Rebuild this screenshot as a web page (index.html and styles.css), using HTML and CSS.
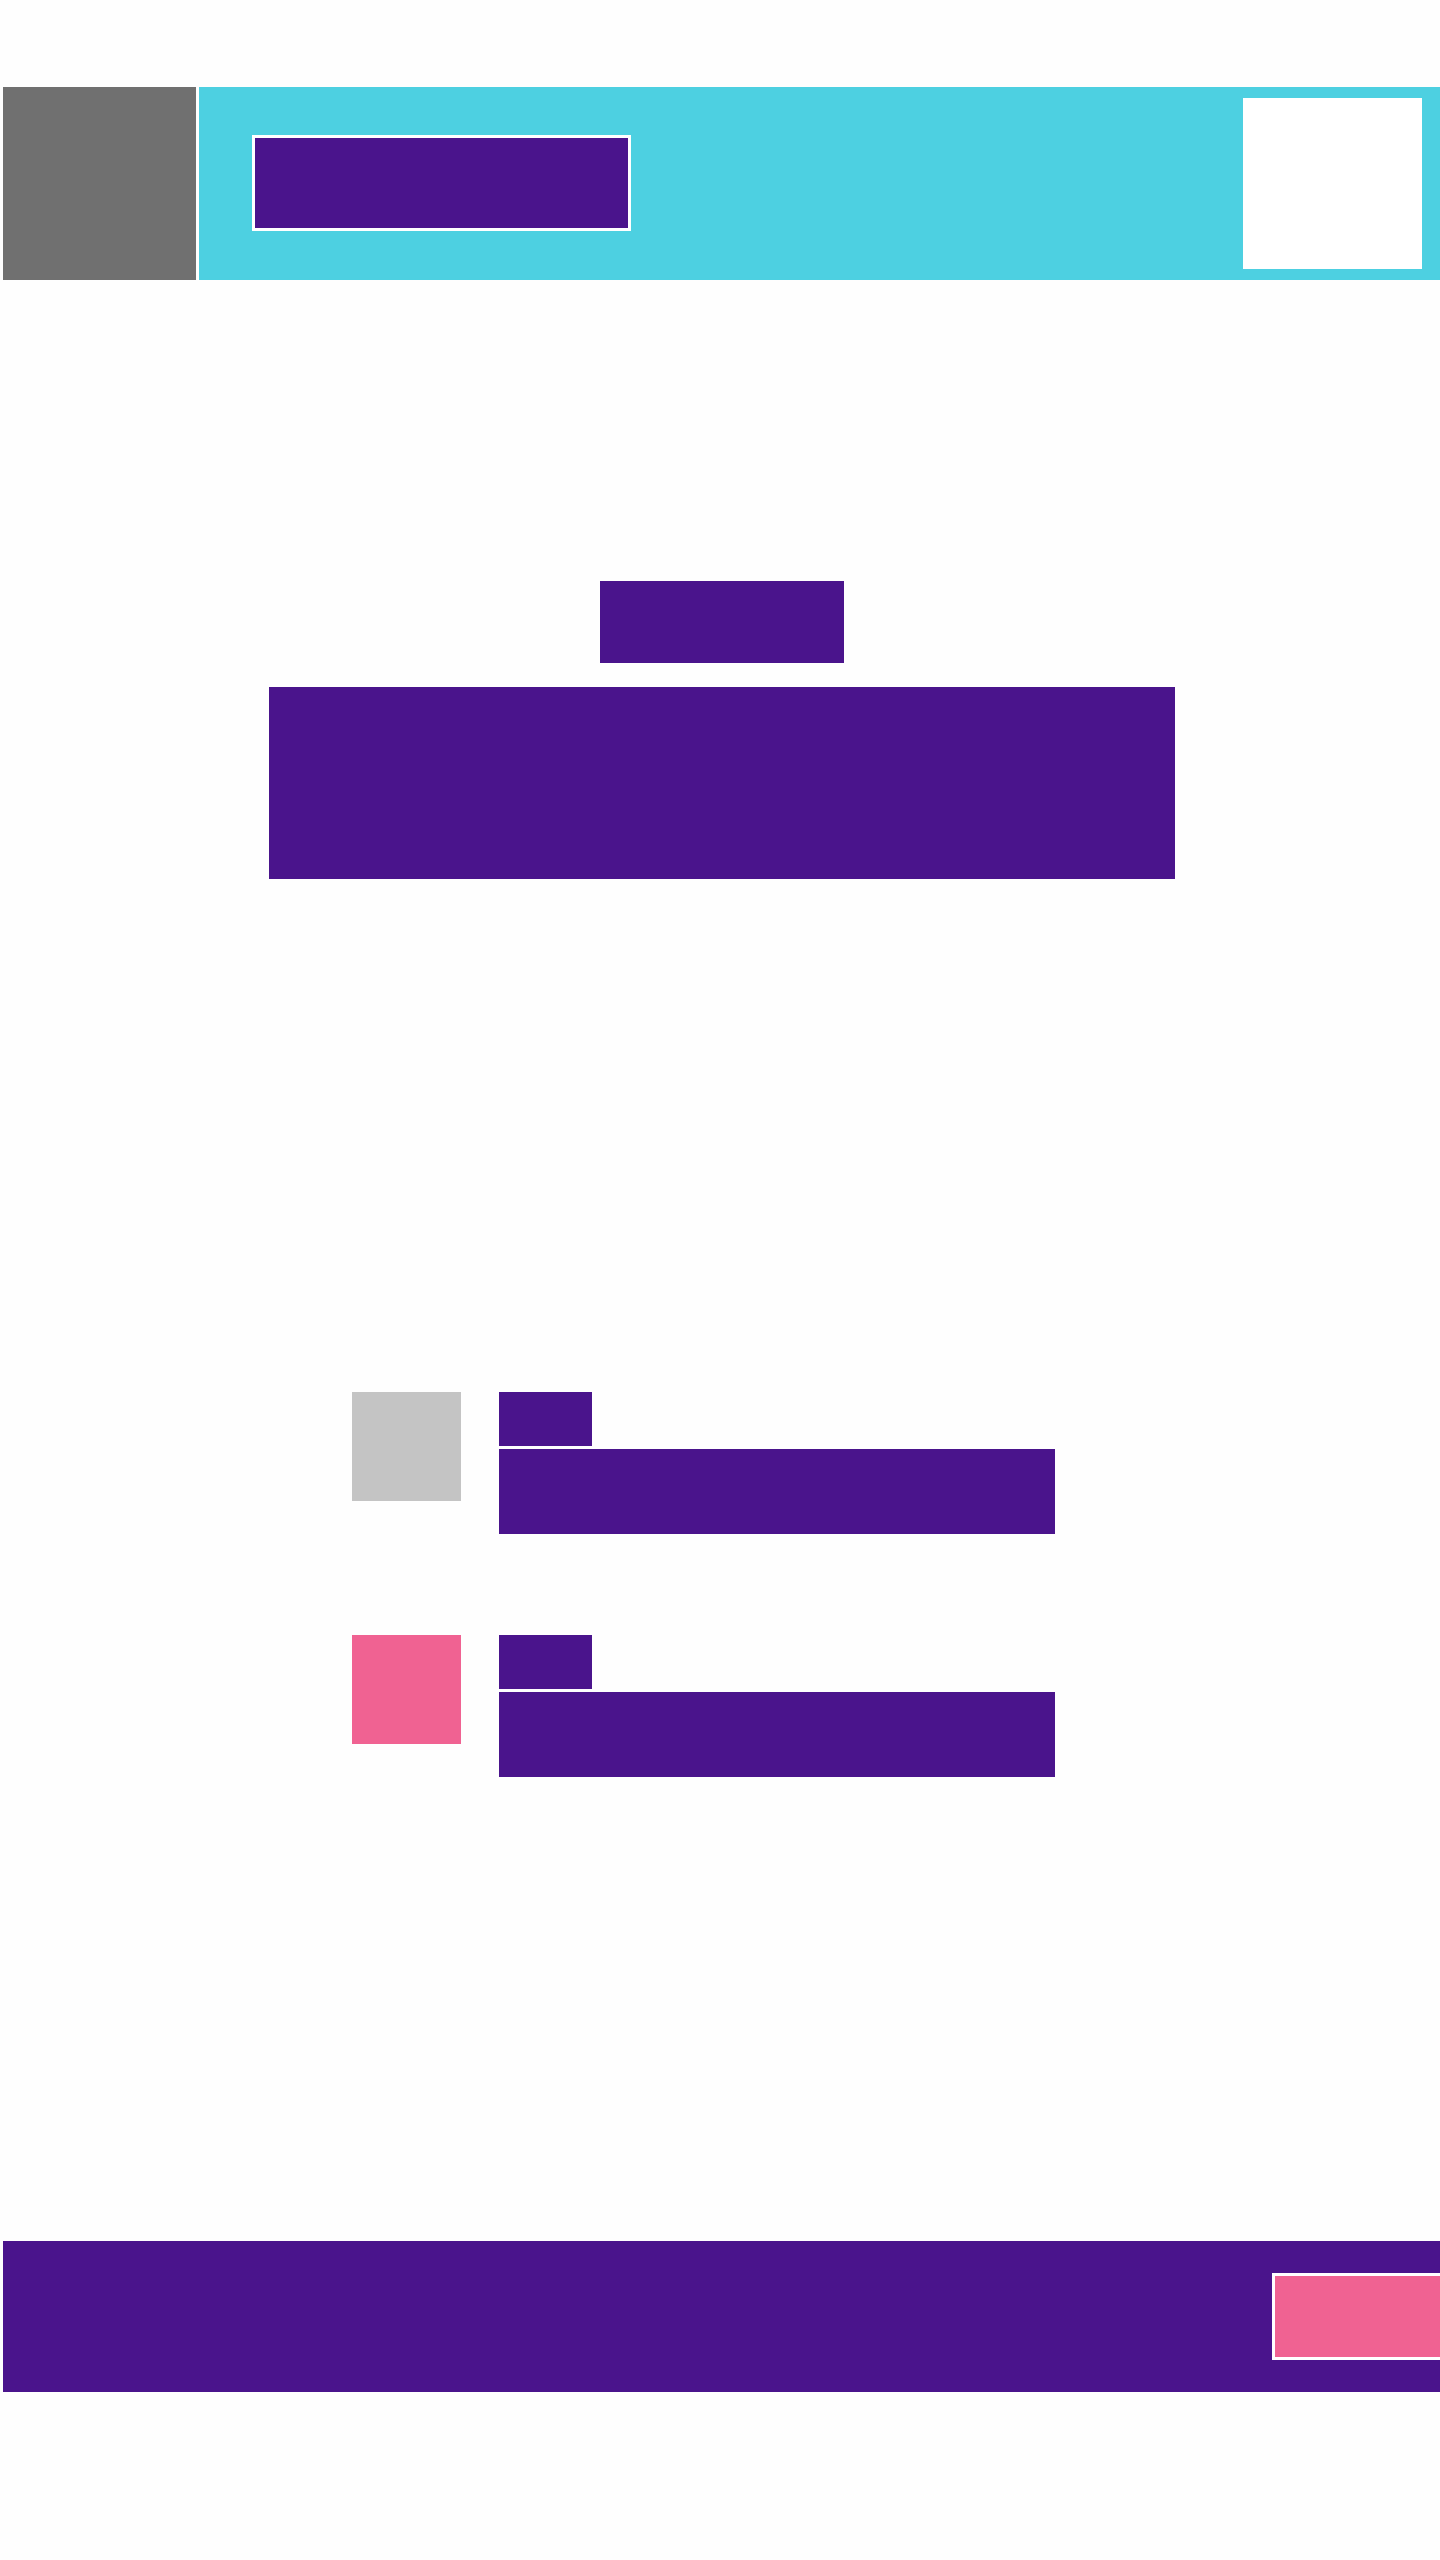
FILE: index.html
```html
<!DOCTYPE html>
<html lang="en">
<head>
<meta charset="utf-8">
<title>Wireframe</title>
<link rel="stylesheet" href="styles.css">
</head>
<body>
<div class="page">
  <header class="header">
    <div class="logo"></div>
    <div class="bar">
      <div class="brand"></div>
      <div class="avatar"></div>
    </div>
  </header>

  <section class="hero">
    <div class="hero-title"></div>
    <div class="hero-text"></div>
  </section>

  <section class="features">
    <div class="feature">
      <div class="feature-icon gray"></div>
      <div class="feature-body">
        <div class="feature-title"></div>
        <div class="feature-text"></div>
      </div>
    </div>
    <div class="feature">
      <div class="feature-icon pink"></div>
      <div class="feature-body">
        <div class="feature-title"></div>
        <div class="feature-text"></div>
      </div>
    </div>
  </section>

  <footer class="footer">
    <div class="cta"></div>
  </footer>
</div>
</body>
</html>
```

FILE: styles.css
```css
html, body {
  margin: 0;
  padding: 0;
  background: #fefefe;
  font-family: "Liberation Sans", Arial, sans-serif;
}

.page {
  padding: 87px 0 0 3px;
  overflow: hidden;
}

.header {
  display: flex;
  height: 193px;
  gap: 3px;
}

.logo {
  width: 193px;
  flex: none;
  background: #707070;
}

.bar {
  flex: 1;
  background: #4dd0e1;
  display: flex;
  align-items: center;
  justify-content: space-between;
  padding: 0 18px 0 53px;
}

.brand {
  width: 373px;
  height: 90px;
  background: #4a148c;
  border: 3px solid #ffffff;
  margin-bottom: 1px;
}

.avatar {
  width: 179px;
  height: 171px;
  background: #ffffff;
}

.hero {
  margin-top: 301px;
  display: flex;
  flex-direction: column;
  align-items: center;
  gap: 24px;
}

.hero-title {
  width: 244px;
  height: 82px;
  background: #4a148c;
}

.hero-text {
  width: 906px;
  height: 192px;
  background: #4a148c;
}

.features {
  margin: 513px 0 0 349px;
  display: flex;
  flex-direction: column;
  gap: 101px;
}

.feature {
  display: flex;
  gap: 38px;
  align-items: flex-start;
}

.feature-icon {
  width: 109px;
  height: 109px;
  flex: none;
}

.feature-icon.gray { background: #c4c4c4; }
.feature-icon.pink { background: #f06292; }

.feature-body {
  display: flex;
  flex-direction: column;
  gap: 3px;
}

.feature-title {
  width: 93px;
  height: 54px;
  background: #4a148c;
}

.feature-text {
  width: 556px;
  height: 85px;
  background: #4a148c;
}

.footer {
  margin-top: 464px;
  height: 151px;
  background: #4a148c;
  display: flex;
  align-items: center;
  justify-content: flex-end;
}

.cta {
  width: 165px;
  height: 81px;
  background: #f06292;
  border: 3px solid #ffffff;
  border-right: 0;
}
```
